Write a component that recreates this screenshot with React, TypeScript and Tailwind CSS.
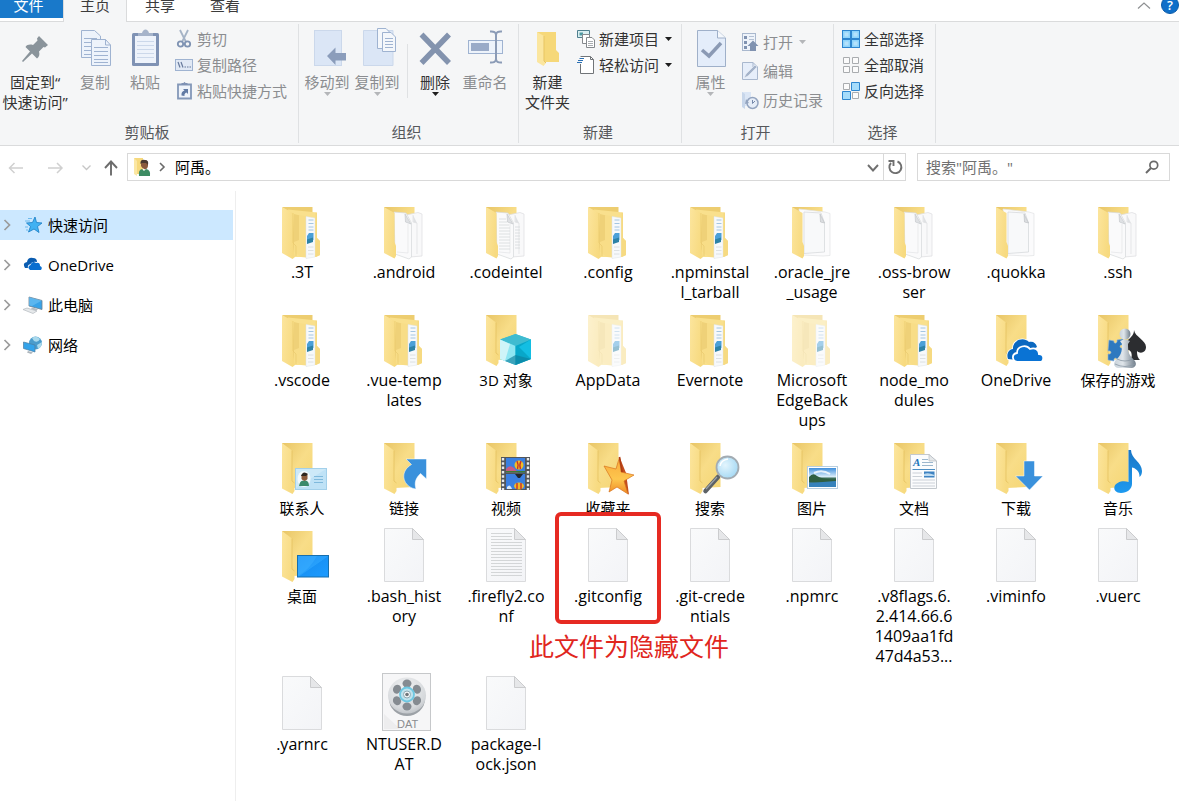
import React from "react";

/* ---------- Explorer item icons (64 x 60 canvas) ---------- */

function Defs() {
  return (
    <svg width="0" height="0" className="absolute" aria-hidden="true">
      <defs>
        <linearGradient id="back" x1="0" y1="0" x2="1" y2="1">
          <stop offset="0" stopColor="#e8c566" />
          <stop offset="0.5" stopColor="#f8dd88" />
          <stop offset="1" stopColor="#f5d675" />
        </linearGradient>
        <linearGradient id="flap" x1="0" y1="0" x2="1" y2="0.4">
          <stop offset="0" stopColor="#fce59d" />
          <stop offset="1" stopColor="#f7da80" />
        </linearGradient>
        <linearGradient id="sheet" x1="0" y1="0" x2="1" y2="1">
          <stop offset="0" stopColor="#f9fafb" />
          <stop offset="1" stopColor="#f3f4f7" />
        </linearGradient>
        <linearGradient id="sky" x1="0" y1="0" x2="1" y2="1">
          <stop offset="0" stopColor="#1e90f5" />
          <stop offset="0.5" stopColor="#27a0fb" />
          <stop offset="0.52" stopColor="#1993f6" />
          <stop offset="1" stopColor="#1c9bff" />
        </linearGradient>
        <linearGradient id="photo" x1="0" y1="0" x2="0" y2="1">
          <stop offset="0" stopColor="#3f8fdc" />
          <stop offset="0.45" stopColor="#d8ecfa" />
          <stop offset="0.55" stopColor="#3e6f58" />
          <stop offset="1" stopColor="#3f86b8" />
        </linearGradient>
        <linearGradient id="star" x1="0" y1="0" x2="0" y2="1">
          <stop offset="0" stopColor="#f9a93a" />
          <stop offset="0.6" stopColor="#fdc64e" />
          <stop offset="1" stopColor="#ef8a25" />
        </linearGradient>
        <linearGradient id="note" x1="0" y1="0" x2="0" y2="1">
          <stop offset="0" stopColor="#1a76c6" />
          <stop offset="1" stopColor="#1d9af0" />
        </linearGradient>
        <linearGradient id="pawn" x1="0" y1="0" x2="1" y2="0">
          <stop offset="0" stopColor="#c9d2da" />
          <stop offset="0.4" stopColor="#dfe5ea" />
          <stop offset="1" stopColor="#6f7d8a" />
        </linearGradient>
        <radialGradient id="lens" cx="0.4" cy="0.4" r="0.7">
          <stop offset="0" stopColor="#e3f5fd" />
          <stop offset="1" stopColor="#9fd6f3" />
        </radialGradient>
        <radialGradient id="reel" cx="0.45" cy="0.3" r="0.8">
          <stop offset="0" stopColor="#f1f2f3" />
          <stop offset="0.7" stopColor="#d6d9dc" />
          <stop offset="1" stopColor="#b4b8bd" />
        </radialGradient>
      </defs>
    </svg>
  );
}

function Canvas({ children, faded }: { children: React.ReactNode; faded?: boolean }) {
  return (
    <svg
      width="64"
      height="60"
      viewBox="0 0 64 60"
      className={faded ? "overflow-visible opacity-50" : "overflow-visible"}
      aria-hidden="true"
    >
      {children}
    </svg>
  );
}

function FolderBase() {
  return (
    <>
      <path d="M12 5H42.500V49L23 50L14 40Z" fill="url(#back)" />
      <path d="M12 5L22 12.500V43L24.500 45V53L22.500 56L12 50.500Z" fill="url(#flap)" />
      <path d="M22 12.500V43L24.500 45" stroke="#e2be5c" strokeWidth="0.7" fill="none" />
    </>
  );
}

function FullFolder({ faded }: { faded?: boolean }) {
  return (
    <Canvas faded={faded}>
      <path d="M12 5H42.500V11L30 20Z" fill="#edcd70" />
      <path d="M18 7.500L47 10.500V36L50 39V53L46 55H22Z" fill="#f9e08d" />
      <path d="M24 12L30 13.500V50L22 50Z" fill="#efd178" />
      <path d="M29 13L36 14V54L41 56L31 55L24 50V40L29 38Z" fill="#f8dd87" />
      <path d="M36 14.500L45 16V55L36 56.500Z" fill="#f7f9fb" stroke="#dde2e6" strokeWidth="0.5" />
      <path d="M38.500 18H43.500M38.500 21.500H43.500M38.500 25H43.500M38.500 28H43.500" stroke="#a4c6e2" strokeWidth="1" />
      <path d="M39 31H43.500V38L37 40.500V34Z" fill="#4ba0d8" />
      <path d="M37 37.500L43 35.500V40L37 42Z" fill="#2d82a6" />
      <path d="M38 45H43.500M38 48.500H43.500M38 52H43.500" stroke="#d5dadd" strokeWidth="0.8" />
      <path d="M45.500 10.500L47 11V36L50 39V53L45.500 55Z" fill="#f6da82" />
      <path d="M12 5L23 11V45L25 55L22.500 57L12 51Z" fill="url(#flap)" />
      <path d="M23 11V41L26 44V54" stroke="#e9c96c" strokeWidth="0.7" fill="none" />
    </Canvas>
  );
}

function PaperFolder({ kind }: { kind: "two" | "lined" | "one" }) {
  return (
    <Canvas>
      <path d="M12 5H42.500V14L24 48Z" fill="url(#back)" />
      {kind === "one" ? (
        <>
          <path d="M19 7L45 10L50 11.500V53.500L43 54L22 53Z" fill="#fbfbfc" stroke="#e1e2e4" strokeWidth="0.7" />
          <path d="M24 10L41 11L44.500 21V50L24 51.500Z" fill="#f8f9fa" stroke="#d3d5d8" strokeWidth="0.7" />
          <path d="M40 12L40.500 20L44.500 21Z" fill="#dcdee1" stroke="#b9bcc0" strokeWidth="0.6" />
        </>
      ) : (
        <>
          <path d="M34 13L46 10.500L50 12V54L38 55Z" fill="#f9f9fa" stroke="#dcdddf" strokeWidth="0.7" />
          <path d="M41 13L41.500 20L45 21Z" fill="#dfe1e4" />
          <path d="M41 13V20L45 21V52" fill="none" stroke="#dcdee0" strokeWidth="0.7" />
          <path d="M22 10L34 11L39.500 21V55L37 57L23 52Z" fill="#fafafb" stroke="#d6d8da" strokeWidth="0.7" />
          <path d="M33 12L33.500 20L39 22Z" fill="#dfe1e4" stroke="#c1c4c8" strokeWidth="0.6" />
          <path d="M25 50L36 51V22" fill="none" stroke="#e3e4e6" strokeWidth="0.7" />
          {kind === "lined" && (
            <path
              d="M25 17H32M25 20H33M25 23H35M25 26H36M25 29H36M25 32H36M25 35H36M25 38H36M25 41H36M25 44H36M25 47H36M41 25H46M41 28H46M41 31H46M41 34H46M41 37H46M41 40H46M41 43H46M41 46H46"
              stroke="#d6d9dc"
              strokeWidth="0.8"
            />
          )}
        </>
      )}
      <path d="M12 5L22.500 11V40L24 44V54L22.500 56.500L12 51Z" fill="url(#flap)" />
    </Canvas>
  );
}

function Sheet({ lined }: { lined?: boolean }) {
  return (
    <Canvas>
      <path d="M12.500 2.500H40.500L51.500 13.500V55.500H12.500Z" fill="url(#sheet)" stroke="#dadbdd" />
      <path d="M40.500 2.500V13.500H51.500Z" fill="#e6e7e9" stroke="#cbccce" strokeLinejoin="round" />
      {lined && (
        <path
          d="M17 7.500H38M17 10.500H38M17 13.500H38M17 16.500H48M17 19.500H48M17 22.500H48M17 25.500H48M17 28.500H48M17 31.500H48M17 34.500H48M17 37.500H48M17 40.500H48M17 43.500H48M17 46.500H48M17 49.500H48"
          stroke="#cfd1d3"
          strokeWidth="0.9"
        />
      )}
    </Canvas>
  );
}

const onedriveBack =
  "M24 49C22 44 25 39 29 39C28 31 39 26 45 32C49 31 52 33 53 37L44 36C39 35 35 38 34 41C30 42 29 46 30 50Z";
const onedriveFront =
  "M34 52C28 52 27 44 33 43C33 36 42 34 46 39C51 37 55 40 55 44C61 44 60 52 56 52Z";

const overlays: Record<string, React.ReactNode> = {
  cube: (
    <>
      <path d="M26 29.500L41.500 24L57 29.500V49L41.500 55L26 49Z" fill="#32c5dc" />
      <path d="M26 29.500L41.500 24L57 29.500L41.500 36Z" fill="#3fbbd0" />
      <path d="M26 29.500L41.500 36V55L26 49Z" fill="#8fe6f2" />
      <path d="M26 29.500L36 34L31 51L26 49Z" fill="#cff4f8" />
      <path d="M41.500 36L57 29.500V49L41.500 55Z" fill="#08a7c9" />
      <path d="M31 51L41.500 45L57 49L41.500 55Z" fill="#0e7f9c" opacity="0.65" />
      <path d="M57 29.500V49L45 37Z" fill="#17c4ea" opacity="0.8" />
    </>
  ),
  onedrive: (
    <>
      <path d={onedriveBack} fill="#0a68c0" stroke="#fff" strokeWidth="1.500" />
      <path d="M24 49C22 44 25 39 29 39C28 31 39 26 45 32C49 31 52 33 53 37L40 44L32 50Z" fill="#0a68c0" />
      <path d={onedriveFront} fill="#0a73d4" stroke="#fff" strokeWidth="1.800" />
    </>
  ),
  games: (
    <>
      <path d="M23 30L28 31C27 34 32 34 31 30L37 29V35C33 34 33 39 37 38V50L31 51C32 47 27 47 28 51L22 50V44C26 45 26 40 22 41Z" fill="#2e79bf" stroke="#8bb4dd" strokeWidth="0.6" />
      <path d="M48 20C49 27 60 30 60 37C60 43 54 44 51 41C51 46 52 48 54 50H44C47 47 46 40 42 40L42 30C45 27 48 25 48 20Z" fill="#2c2d30" />
      <circle cx="39" cy="24" r="5.500" fill="url(#pawn)" />
      <path d="M34 31Q39 28 44 31L42 34C42 42 43 45 47 49C51 52 51 57 46 58H32C27 57 27 52 31 49C35 45 36 42 36 34Z" fill="url(#pawn)" />
      <path d="M31 49Q39 53 47 49M29 54Q39 59 49 54" fill="none" stroke="#8a98a4" strokeWidth="0.8" />
    </>
  ),
  contact: (
    <>
      <rect x="25.500" y="30.500" width="31" height="21" fill="#bfe2f6" stroke="#a3d0ea" />
      <path d="M26 31H56L26 50Z" fill="#d7eefa" opacity="0.6" />
      <ellipse cx="34" cy="41" rx="6.500" ry="8" fill="#f2f9fd" />
      <path d="M31.500 37Q34.500 33 37.500 37V41Q34.500 45 31.500 41Z" fill="#8a5a3b" />
      <path d="M31 38Q33 32 38 36L36 38Z" fill="#2e2620" />
      <path d="M29 48Q30 42 34 43Q39 42 39 48Z" fill="#3b8a6c" />
      <path d="M44 38.500H53M44 41.500H53M44 44.500H53" stroke="#7fb9dc" strokeWidth="1.200" />
    </>
  ),
  link: (
    <path d="M34 21H54.500V41L48.500 35.500C44 40 42 44 44 51C35 50 29 41 33 33C34.500 30 37 28 39.500 26.500Z" fill="#3a91dc" stroke="#fff" strokeWidth="0.500" />
  ),
  video: (
    <>
      <rect x="27" y="19" width="29" height="33" fill="#53565b" />
      <path d="M29 20V52M54 20V52" stroke="#e8eaec" strokeWidth="2.400" strokeDasharray="2.500 1.800" />
      <rect x="32" y="20" width="19" height="14.500" fill="#3b7fe0" />
      <rect x="32" y="36" width="19" height="15" fill="#3b7fe0" />
      <path d="M32 31Q36 26 40 30L44 34.500H32Z" fill="#c65b86" />
      <path d="M32 33H51V34.500H32Z" fill="#3d7b33" />
      <ellipse cx="45" cy="27" rx="4.500" ry="4.500" fill="#f0bf27" />
      <path d="M43 23Q45 27 43.500 31M47 23Q45 27 46.500 31" stroke="#c92f2b" strokeWidth="1.400" fill="none" />
      <path d="M41 36H49L46 40H44Z" fill="#23262d" />
      <ellipse cx="45" cy="48" rx="5" ry="3.500" fill="#eeb929" />
      <path d="M43 45V51M47 45V51" stroke="#c92f2b" strokeWidth="1.400" />
      <path d="M33 49Q36 45 38 51H33Z" fill="#d9e8f5" />
    </>
  ),
  favorite: (
    <>
      <path d="M43.500 19L50 35L53 57L48 50Z" fill="#c34d1d" />
      <path d="M43.500 19L45 34L58 37L48 43L52 56L41 49L33 54L36 42L28 28L40 31Z" fill="url(#star)" stroke="#d9731c" strokeWidth="0.700" strokeLinejoin="round" />
      <path d="M43.500 19L46 34" stroke="#b03c12" strokeWidth="1.600" />
    </>
  ),
  search: (
    <>
      <path d="M40 39L27.500 53" stroke="#5d6266" strokeWidth="4.500" strokeLinecap="round" />
      <path d="M39 39L28 51" stroke="#9ba2a8" strokeWidth="1.200" />
      <circle cx="49.500" cy="29.500" r="11" fill="url(#lens)" stroke="#a3acb3" strokeWidth="1.800" />
      <path d="M42 28Q43 22 50 21" stroke="#fff" strokeWidth="1.500" fill="none" />
    </>
  ),
  picture: (
    <>
      <rect x="27.500" y="28.500" width="30" height="22" fill="#fff" stroke="#b9cfdf" />
      <rect x="29" y="30" width="27" height="19" fill="url(#photo)" />
      <path d="M29 39Q33 34 37 38Q44 42 56 41V43Q42 46 29 44Z" fill="#2f5f41" />
      <path d="M34 35Q42 31 50 36" stroke="#fff" strokeWidth="2" fill="none" opacity="0.8" />
      <path d="M29 45L56 43V49H29Z" fill="#3682bb" />
    </>
  ),
  document: (
    <>
      <path d="M28.500 16.500H47L54.500 23V50.500H28.500Z" fill="#fbfcfd" stroke="#c3c8cd" />
      <path d="M47 16.500V23H54.500Z" fill="#e5e8ea" stroke="#b6bcc2" strokeWidth="0.700" />
      <text x="31" y="28" fontSize="11" fontStyle="italic" fontWeight="700" fontFamily="Liberation Serif, serif" fill="#2174b9">A</text>
      <path d="M40 21.500H46M40 24.500H51M40 27.500H51" stroke="#9cb7cd" strokeWidth="1" />
      <path d="M30.500 31.500H53" stroke="#4c8ec4" strokeWidth="1" />
      <path d="M30.500 35H40M30.500 38.500H40M30.500 42H53M30.500 45H53M30.500 48H53" stroke="#c5ccd2" strokeWidth="0.900" />
      <rect x="42" y="33.500" width="10.500" height="6" fill="#3f83c2" />
      <path d="M42 36Q46 34 52.500 37V38H42Z" fill="#bcdaf0" />
    </>
  ),
  download: <path d="M40 23H50.500V38H59L45.500 52L31.500 38H40Z" fill="#3a91dc" stroke="#fff" strokeWidth="0.500" />,
  music: (
    <path d="M42.500 12H45C45 21 56 24 56 33C56 36 55 38 53.500 39C54 33 49 30 46 29.500V46C46 51 41 55 35 55C30 55 27.500 52 28.500 48.500C30 44 37 42 42.500 44Z" fill="url(#note)" />
  ),
  desktop: (
    <>
      <rect x="27.500" y="29.500" width="31" height="21.500" fill="url(#sky)" stroke="#176fae" />
      <path d="M28 50Q40 43 47 30H28Z" fill="#3bb0ff" opacity="0.5" />
    </>
  ),
};

function SpecialFolder({ kind }: { kind: string }) {
  return (
    <Canvas>
      <FolderBase />
      {overlays[kind]}
    </Canvas>
  );
}

function DatFile() {
  const holes = [0, 60, 120, 180, 240, 300];
  return (
    <Canvas>
      <rect x="10.500" y="-0.500" width="48" height="57" fill="#f6f6f7" stroke="#c6c8ca" />
      <path d="M12 40L28 55H12Z" fill="#e4e4e6" opacity="0.5" />
      <ellipse cx="35" cy="25" rx="18" ry="17" fill="#9ca1a6" />
      <ellipse cx="35" cy="21.500" rx="19" ry="18" fill="url(#reel)" />
      {holes.map((angle) => (
        <ellipse key={angle} cx="35" cy="9.500" rx="4.500" ry="4" fill="#858b91" transform={`rotate(${angle} 35 21)`} />
      ))}
      <circle cx="35" cy="20.500" r="7" fill="#bfe3ee" stroke="#6ec8e2" strokeWidth="1.800" />
      <circle cx="35" cy="20.500" r="3.500" fill="#f4f7f8" stroke="#8fa9b3" />
      <circle cx="35" cy="20.500" r="1.800" fill="#6f767b" />
      <text x="25" y="53.500" fontSize="11" fontFamily="Liberation Sans, sans-serif" fill="#8b8d90">DAT</text>
    </Canvas>
  );
}

/* ---------- File data ---------- */

type Item = { lines: string[]; icon: React.ReactNode; marked?: boolean };

const items: Item[] = [
  { lines: [".3T"], icon: <FullFolder /> },
  { lines: [".android"], icon: <PaperFolder kind="two" /> },
  { lines: [".codeintel"], icon: <PaperFolder kind="lined" /> },
  { lines: [".config"], icon: <FullFolder /> },
  { lines: [".npminstal", "l_tarball"], icon: <FullFolder /> },
  { lines: [".oracle_jre", "_usage"], icon: <PaperFolder kind="one" /> },
  { lines: [".oss-brow", "ser"], icon: <PaperFolder kind="two" /> },
  { lines: [".quokka"], icon: <PaperFolder kind="one" /> },
  { lines: [".ssh"], icon: <PaperFolder kind="two" /> },
  { lines: [".vscode"], icon: <FullFolder /> },
  { lines: [".vue-temp", "lates"], icon: <FullFolder /> },
  { lines: ["3D 对象"], icon: <SpecialFolder kind="cube" /> },
  { lines: ["AppData"], icon: <FullFolder faded /> },
  { lines: ["Evernote"], icon: <FullFolder /> },
  { lines: ["Microsoft", "EdgeBack", "ups"], icon: <FullFolder faded /> },
  { lines: ["node_mo", "dules"], icon: <FullFolder /> },
  { lines: ["OneDrive"], icon: <SpecialFolder kind="onedrive" /> },
  { lines: ["保存的游戏"], icon: <SpecialFolder kind="games" /> },
  { lines: ["联系人"], icon: <SpecialFolder kind="contact" /> },
  { lines: ["链接"], icon: <SpecialFolder kind="link" /> },
  { lines: ["视频"], icon: <SpecialFolder kind="video" /> },
  { lines: ["收藏夹"], icon: <SpecialFolder kind="favorite" /> },
  { lines: ["搜索"], icon: <SpecialFolder kind="search" /> },
  { lines: ["图片"], icon: <SpecialFolder kind="picture" /> },
  { lines: ["文档"], icon: <SpecialFolder kind="document" /> },
  { lines: ["下载"], icon: <SpecialFolder kind="download" /> },
  { lines: ["音乐"], icon: <SpecialFolder kind="music" /> },
  { lines: ["桌面"], icon: <SpecialFolder kind="desktop" /> },
  { lines: [".bash_hist", "ory"], icon: <Sheet /> },
  { lines: [".firefly2.co", "nf"], icon: <Sheet lined /> },
  { lines: [".gitconfig"], icon: <Sheet />, marked: true },
  { lines: [".git-crede", "ntials"], icon: <Sheet /> },
  { lines: [".npmrc"], icon: <Sheet /> },
  { lines: [".v8flags.6.", "2.414.66.6", "1409aa1fd", "47d4a53..."], icon: <Sheet /> },
  { lines: [".viminfo"], icon: <Sheet /> },
  { lines: [".vuerc"], icon: <Sheet /> },
  { lines: [".yarnrc"], icon: <Sheet /> },
  { lines: ["NTUSER.D", "AT"], icon: <DatFile /> },
  { lines: ["package-l", "ock.json"], icon: <Sheet /> },
];

const hanText = /[\u4e00-\u9fff]/;

function FileTile({ item }: { item: Item }) {
  const size = hanText.test(item.lines[0]) ? "text-[15px]" : "text-[16px]";
  return (
    <li className="relative">
      <button type="button" className={`flex w-full flex-col items-center whitespace-nowrap leading-5 text-black ${size}`}>
        {item.icon}
        {item.lines.map((line) => (
          <span key={line} className="leading-5">
            {line}
          </span>
        ))}
      </button>
      {item.marked && (
        <>
          <span className="pointer-events-none absolute -inset-x-0.5 -top-3.5 h-28 rounded-md border-4 border-[#e62a22]" />
          <span className="pointer-events-none absolute -left-7 top-[104px] whitespace-nowrap text-[25px] leading-8 text-[#e0261d]">
            此文件为隐藏文件
          </span>
        </>
      )}
    </li>
  );
}

/* ---------- Ribbon ---------- */

function Caret({ dim }: { dim?: boolean }) {
  return (
    <svg width="7" height="4" viewBox="0 0 7 4" aria-hidden="true">
      <path d="M0 0H7L3.500 4Z" fill={dim ? "#b4b6b9" : "#1e1e1e"} />
    </svg>
  );
}

function BigButton({
  icon,
  lines,
  width,
  dim,
  caret,
}: {
  icon: React.ReactNode;
  lines: string[];
  width: string;
  dim?: boolean;
  caret?: boolean;
}) {
  return (
    <button
      type="button"
      disabled={dim}
      className={`flex shrink-0 flex-col items-center whitespace-nowrap text-[15px] leading-5 ${width} ${dim ? "text-[#8b8d90]" : "text-[#333333]"}`}
    >
      <svg width="40" height="44" viewBox="0 0 40 44" className="mb-0.5 mt-0.5" aria-hidden="true">
        {icon}
      </svg>
      {lines.map((line) => (
        <span key={line}>{line}</span>
      ))}
      {caret && <Caret dim={dim} />}
    </button>
  );
}

function SmallButton({ icon, label, dim, caret }: { icon: React.ReactNode; label: string; dim?: boolean; caret?: boolean }) {
  return (
    <button
      type="button"
      disabled={dim}
      className={`flex items-center gap-1 whitespace-nowrap text-[15px] leading-[26px] ${dim ? "text-[#8b8d90]" : "text-[#333333]"}`}
    >
      <svg width="18" height="20" viewBox="0 0 18 20" aria-hidden="true">
        {icon}
      </svg>
      <span>{label}</span>
      {caret && (
        <span className="ml-0.5">
          <Caret dim={dim} />
        </span>
      )}
    </button>
  );
}

function Group({ title, width, children }: { title: string; width: string; children: React.ReactNode }) {
  return (
    <section aria-label={title} className={`my-0.5 flex shrink-0 flex-col border-r border-[#dfe1e3] ${width}`}>
      <div className="flex h-[98px] items-start">{children}</div>
      <h2 className="pb-px pr-1 text-center text-[15px] leading-5 text-[#56585b]">{title}</h2>
    </section>
  );
}

const blue = "#9fb3d1";

const icons = {
  pin: (
    <path d="M24 10L33 19L30 21.500L28.500 21L24 25.500C25 29 24 31 22 32.500L17 27.500L8 36L7 35L15 25.500L10.500 21C12 18.500 15 18 18 19L22.500 14.500L22 12.500Z" fill="#8a949b" />
  ),
  copy: (
    <>
      <path d="M6.500 4.500H19.500L25.500 10V31.500H6.500Z" fill="#edf3fb" stroke={blue} />
      <path d="M9 12.500H22M9 16.500H22M9 20.500H22M9 24.500H22M9 28.500H22" stroke={blue} />
      <path d="M16.500 13.500H30.500L35.500 19V39.500H16.500Z" fill="#edf3fb" stroke={blue} />
      <path d="M30.500 13.500V19H35.500M19 21.500H33M19 25.500H33M19 29.500H33M19 33.500H33M19 36.500H33" fill="none" stroke={blue} />
    </>
  ),
  paste: (
    <>
      <rect x="7" y="7" width="27" height="33" rx="1.500" fill="#7f92b4" />
      <rect x="10" y="10" width="21" height="27" fill="#eef3fb" />
      <path d="M12 15.500H29M12 19.500H29M12 23.500H29M12 27.500H29M12 31.500H29" stroke="#ccd8ea" />
      <path d="M13 10V7H17Q18 3.500 20.500 3.500T24 7H28V10Z" fill="#a5b3ca" />
    </>
  ),
  cut: (
    <>
      <path d="M5 1L11 13M13 1L7 13" stroke="#a5b3c6" strokeWidth="1.800" />
      <circle cx="5.500" cy="15" r="2.700" fill="none" stroke="#7f93b3" strokeWidth="1.800" />
      <circle cx="12.500" cy="15" r="2.700" fill="none" stroke="#7f93b3" strokeWidth="1.800" />
    </>
  ),
  path: (
    <>
      <rect x="0.500" y="4.500" width="17" height="11" fill="#e1e9f5" stroke={blue} />
      <path d="M3 7L5 12.500M6 7L8 12.500M9.500 12H11M12 12H13.500M14.500 12H16" stroke="#677a9c" strokeWidth="1.200" />
    </>
  ),
  shortcut: (
    <>
      <path d="M3 3.500H16V17.500H3Z" fill="#eef3fa" stroke="#8498b8" strokeWidth="1.800" />
      <path d="M6.500 4V2H8.500Q9.500 0 10.500 2H12.500V4Z" fill="#7f92b4" />
      <path d="M6.500 14.500Q6 10.500 9.500 9.500L8 8H13V13L11.500 11.500Q9 12.500 9.500 15Z" fill="#617aa4" />
    </>
  ),
  move: (
    <>
      <rect x="7.500" y="4.500" width="27" height="35" fill="#dbe6f6" stroke="#cbd8eb" />
      <path d="M20 30L28.500 21.500V27H39V34.500H28.500V39Z" fill="#8b9dbb" />
    </>
  ),
  copyTo: (
    <>
      <path d="M6.500 4.500H36V39.500H6.500Z" fill="#dbe6f6" stroke="#cbd8eb" />
      <path d="M20.500 2.500H29L33.500 7V22.500H20.500Z" fill="#f4f7fb" stroke={blue} />
      <path d="M25.500 6.500H34L38.500 11V25.500H25.500Z" fill="#f4f7fb" stroke={blue} />
      <path d="M28 12.500H36M28 15.500H36M28 18.500H36M28 21.500H36" stroke={blue} />
    </>
  ),
  remove: <path d="M6.500 8.500L34 37M34 8.500L6.500 37" stroke="#8393ae" strokeWidth="5.500" />,
  rename: (
    <>
      <rect x="3.500" y="14.500" width="34" height="13" fill="#edf3fb" stroke={blue} />
      <rect x="6" y="17" width="18" height="8" fill="#9aabc8" />
      <path d="M25 5.500Q31 5 31 9V33Q31 37 25 36.500M37 5.500Q31 5 31 9M31 33Q31 37 37 36.500" fill="none" stroke="#8b9bb6" strokeWidth="2" />
    </>
  ),
  newFolder: (
    <>
      <path d="M9 6H28V24L31 27V36H16Z" fill="#f6d879" />
      <path d="M9 6L16 10V35L18 37L15.500 40L9 36Z" fill="#fbe69f" />
      <path d="M16 10V35L18 37" fill="none" stroke="#e7c563" />
    </>
  ),
  newItem: (
    <>
      <path d="M0.500 1.500H12.500V8.500H0.500Z" fill="#d9eef0" stroke="#4e7f8e" />
      <path d="M2.500 3.500H6V6.500H2.500Z" fill="#4e9aa3" />
      <path d="M5.500 5.500H12.500V14.500H5.500Z" fill="#fff" stroke="#85898d" />
      <path d="M9.500 8.500H15L17.500 11V18.500H9.500Z" fill="#fff" stroke="#85898d" />
      <path d="M11 12.500H16M11 14.500H16M11 16.500H16" stroke="#a9adb1" />
    </>
  ),
  easy: (
    <>
      <path d="M3.500 1.500H13.500L16.500 4.500V18.500H3.500V9" fill="#fff" stroke="#707478" />
      <path d="M13.500 1.500V4.500H16.500" fill="none" stroke="#707478" />
      <path d="M2.500 3.500H7M1 5.500H6M0 7.500H5" stroke="#2c70b3" />
    </>
  ),
  properties: (
    <>
      <path d="M6.500 4.500H26.500L34.500 12V40.500H6.500Z" fill="#e4edfa" stroke="#9fb0c9" />
      <path d="M26.500 4.500V12H34.500" fill="#f5f8fc" stroke="#9fb0c9" />
      <path d="M11 24L18 30L30 17" fill="none" stroke="#8b9ab4" strokeWidth="3.500" />
    </>
  ),
  open: (
    <>
      <rect x="1.500" y="1.500" width="13" height="17" fill="#eef3fa" stroke="#a9b8ce" />
      <path d="M3 4H6V7H3ZM3 9H6V12H3ZM3 14H6V17H3Z" fill="#8092b0" />
      <path d="M8 4.500H13M8 7.500H13" stroke="#b4c1d4" />
      <path d="M12 8.500L17.500 14H15V19H9V14H6.500Z" fill="#8092b0" />
    </>
  ),
  edit: (
    <>
      <path d="M1.500 1.500H12L16.500 6V18.500H1.500Z" fill="#e6eefa" stroke="#a9b8ce" />
      <path d="M12 1.500V6H16.500" fill="none" stroke="#a9b8ce" />
      <path d="M3 17L5 13L14 4L16 6L7 15Z" fill="#a4b3ca" stroke="#f4f7fb" strokeWidth="0.500" />
    </>
  ),
  history: (
    <>
      <path d="M1 2H10V16H1Z" fill="#dbe6f5" />
      <path d="M1 2L4 4V19L1 17Z" fill="#c7d6ea" />
      <circle cx="11.500" cy="13" r="5.500" fill="#e6edf7" stroke="#93a4bf" strokeWidth="1.500" />
      <path d="M11.500 10V13.500L14 11" fill="none" stroke="#7689aa" />
      <path d="M5 9L4 14L8 13" fill="#93a4bf" />
    </>
  ),
  selectAll: (
    <>
      <rect x="0.500" y="1.500" width="17" height="17" fill="#8ed4fb" stroke="#2e86cf" />
      <path d="M9 1V19M0 10H18" stroke="#2e86cf" strokeWidth="2" />
      <path d="M2.500 3.500H6.500V7.500H2.500ZM11.500 3.500H15.500V7.500H11.500ZM2.500 12.500H6.500V16.500H2.500ZM11.500 12.500H15.500V16.500H11.500Z" fill="#b4e2fc" />
    </>
  ),
  selectNone: (
    <path d="M1.500 2.500H7.500V8.500H1.500ZM10.500 2.500H16.500V8.500H10.500ZM1.500 11.500H7.500V17.500H1.500ZM10.500 11.500H16.500V17.500H10.500Z" fill="#fbfbfb" stroke="#a9acaf" />
  ),
  invert: (
    <>
      <path d="M1.500 2.500H7.500V8.500H1.500ZM10.500 11.500H16.500V17.500H10.500Z" fill="#fbfbfb" stroke="#a9acaf" />
      <path d="M9.500 1.500H17.500V9.500H9.500ZM0.500 10.500H8.500V18.500H0.500Z" fill="#a5dcfb" stroke="#2e86cf" />
    </>
  ),
};

function Ribbon() {
  return (
    <div className="flex overflow-hidden border-y border-[#dadbdc] bg-[#f5f6f7]">
      <Group title="剪贴板" width="w-[299px]">
        <BigButton icon={icons.pin} lines={["固定到“", "快速访问”"]} width="w-[70px]" />
        <BigButton icon={icons.copy} lines={["复制"]} width="w-[50px]" dim />
        <BigButton icon={icons.paste} lines={["粘贴"]} width="w-[50px]" dim />
        <div className="flex flex-col pl-[5px] pt-0.5">
          <SmallButton icon={icons.cut} label="剪切" dim />
          <SmallButton icon={icons.path} label="复制路径" dim />
          <SmallButton icon={icons.shortcut} label="粘贴快捷方式" dim />
        </div>
      </Group>
      <Group title="组织" width="w-[220px]">
        <div className="flex pl-[3px]">
          <BigButton icon={icons.move} lines={["移动到"]} width="w-[50px]" dim caret />
          <BigButton icon={icons.copyTo} lines={["复制到"]} width="w-[50px]" dim caret />
        </div>
        <div className="ml-[5px] mt-5 h-[54px] w-px bg-[#dfe1e3]" />
        <div className="flex pl-0.5">
          <BigButton icon={icons.remove} lines={["删除"]} width="w-[50px]" caret />
          <BigButton icon={icons.rename} lines={["重命名"]} width="w-[50px]" dim />
        </div>
      </Group>
      <Group title="新建" width="w-[163px]">
        <BigButton icon={icons.newFolder} lines={["新建", "文件夹"]} width="w-[57px]" />
        <div className="flex flex-col pl-px pt-0.5">
          <SmallButton icon={icons.newItem} label="新建项目" caret />
          <SmallButton icon={icons.easy} label="轻松访问" caret />
        </div>
      </Group>
      <Group title="打开" width="w-[152px]">
        <BigButton icon={icons.properties} lines={["属性"]} width="w-[57px]" dim caret />
        <div className="flex flex-col gap-[3px] pl-0.5 pt-[5px]">
          <SmallButton icon={icons.open} label="打开" dim caret />
          <SmallButton icon={icons.edit} label="编辑" dim />
          <SmallButton icon={icons.history} label="历史记录" dim />
        </div>
      </Group>
      <Group title="选择" width="w-[102px]">
        <div className="flex flex-col pl-2 pt-0.5">
          <SmallButton icon={icons.selectAll} label="全部选择" />
          <SmallButton icon={icons.selectNone} label="全部取消" />
          <SmallButton icon={icons.invert} label="反向选择" />
        </div>
      </Group>
    </div>
  );
}

/* ---------- Tabs, address bar, navigation ---------- */

function TabBar() {
  return (
    <header className="flex h-[21px] items-start text-[15px] leading-[11px] text-[#3c3c3c]">
      <button type="button" className="h-[18px] w-[63px] bg-[#1979ca] pb-[7px] pr-1.5 text-white">
        文件
      </button>
      <button type="button" className="relative z-10 h-[22px] w-16 border-x border-[#dadbdc] bg-[#f5f6f7] pb-[11px]">
        主页
      </button>
      <button type="button" className="h-[22px] w-[66px] pb-[11px]">
        共享
      </button>
      <button type="button" className="h-[22px] w-16 pb-[11px]">
        查看
      </button>
      <div className="ml-auto flex items-start gap-2">
        <button type="button" aria-label="折叠功能区" className="pt-0.5">
          <svg width="14" height="7" viewBox="0 0 14 7">
            <path d="M1 6.500L7 1L13 6.500" fill="none" stroke="#8e9092" strokeWidth="1.200" />
          </svg>
        </button>
        <button type="button" aria-label="帮助">
          <svg width="20" height="14" viewBox="0 0 20 14">
            <circle cx="11" cy="5" r="8.500" fill="#0f6fc9" stroke="#0a5aa8" />
            <text x="11" y="10" textAnchor="middle" fontSize="13" fontWeight="600" fontFamily="Open Sans, sans-serif" fill="#fff">?</text>
          </svg>
        </button>
      </div>
    </header>
  );
}

function AddressBar() {
  return (
    <div className="flex items-center pb-2.5 pr-[9px] pt-[7px]">
      <button type="button" aria-label="后退" className="flex w-8 justify-center pt-0.5">
        <svg width="16" height="12" viewBox="0 0 16 12">
          <path d="M15 6H1.500M6.500 1L1.500 6L6.500 11" fill="none" stroke="#d0d0d0" strokeWidth="1.500" />
        </svg>
      </button>
      <button type="button" aria-label="前进" className="flex w-12 justify-center pt-0.5">
        <svg width="16" height="12" viewBox="0 0 16 12">
          <path d="M0 6H14M9 1L14 6L9 11" fill="none" stroke="#d0d0d0" strokeWidth="1.500" />
        </svg>
      </button>
      <button type="button" aria-label="最近浏览的位置" className="flex w-3 justify-center pt-0.5">
        <svg width="9" height="6" viewBox="0 0 9 6">
          <path d="M0.500 0.500L4.500 4.500L8.500 0.500" fill="none" stroke="#c6c6c6" strokeWidth="1.300" />
        </svg>
      </button>
      <button type="button" aria-label="上移" className="flex w-[35px] justify-center pt-0.5">
        <svg width="16" height="16" viewBox="0 0 16 16">
          <path d="M9 15.500V2M3 8L9 1.500L15 8" fill="none" stroke="#6c6c6c" strokeWidth="1.900" />
        </svg>
      </button>
      <div className="flex h-7 min-w-0 flex-1 border border-[#d9d9d9]">
        <button type="button" className="flex items-center pl-[5px] text-[15px] leading-5 text-black">
          <svg width="18" height="20" viewBox="0 0 18 20" aria-hidden="true">
            <path d="M1 1H10V17H4Z" fill="#f6d97d" />
            <path d="M1 1L4 4V19L1 17Z" fill="#fbe7a4" />
            <path d="M8 7Q8 3 11 3Q15 3 15 7V9Q14 13 11 12Q9 11 8 9Z" fill="#8a5a3d" />
            <path d="M7.500 7Q7 2 12 3Q16 3 15 8L13 6H9Z" fill="#4a3a30" />
            <path d="M6 19Q5 13 9 12L11 14L13 12Q18 13 17 19Z" fill="#3d8c63" />
          </svg>
          <svg width="24" height="10" viewBox="0 0 24 10" aria-hidden="true">
            <path d="M9 1L13 5L9 9" fill="none" stroke="#6a6a6a" strokeWidth="1.600" />
          </svg>
          阿禹。
        </button>
        <button type="button" aria-label="以前的位置" className="ml-auto flex w-5 items-center justify-center pt-0.5">
          <svg width="12" height="8" viewBox="0 0 12 8">
            <path d="M1 1L6 6.500L11 1" fill="none" stroke="#6f6f6f" strokeWidth="1.900" />
          </svg>
        </button>
        <button type="button" aria-label="刷新" className="flex w-[22px] items-center justify-center border-l border-[#d9d9d9]">
          <svg width="16" height="16" viewBox="0 0 16 16">
            <path d="M10.500 2.500A6 6 0 1 1 4 4M1.500 2H6.500V7" fill="none" stroke="#6f6f6f" strokeWidth="1.900" />
          </svg>
        </button>
      </div>
      <form role="search" className="ml-[11px] flex h-7 w-[253px] items-center border border-[#d9d9d9] pl-2 pr-2.5" onSubmit={(e) => e.preventDefault()}>
        <input
          type="search"
          aria-label="搜索"
          placeholder={'搜索"阿禹。"'}
          className="min-w-0 flex-1 bg-transparent text-[15px] leading-5 outline-none placeholder:text-[#707070]"
        />
        <button type="submit" aria-label="开始搜索">
          <svg width="14" height="14" viewBox="0 0 14 14">
            <circle cx="8.800" cy="5.200" r="3.900" fill="none" stroke="#6a6a6a" strokeWidth="1.700" />
            <path d="M6 8L1 13" stroke="#6a6a6a" strokeWidth="2" />
          </svg>
        </button>
      </form>
    </div>
  );
}

const places: { label: string; current?: boolean; icon: React.ReactNode }[] = [
  {
    label: "快速访问",
    current: true,
    icon: (
      <>
        <path d="M12 2L13.500 7.500L19 8L14.500 11.500L16 17.500L11 14L5.500 17L7.500 11.500L3.500 8L9.500 7.500Z" fill="#41b1f2" stroke="#2285c9" strokeWidth="0.900" />
        <path d="M5 3.500H9M2 6H7M2 12H5M3 15H5" stroke="#6db9ec" />
      </>
    ),
  },
  {
    label: "OneDrive",
    icon: (
      <>
        <path d="M2 13Q-1 8 4 7Q5 2 10 3Q14 3 14 7Q9 6 7.500 9Q4 10 5 13Z" fill="#0a5cb0" />
        <path d="M7 15Q3.500 12 7.500 10Q9 5.500 13 8Q17 7 17 11Q20 12 18 15Z" fill="#0a6fd0" />
      </>
    ),
  },
  {
    label: "此电脑",
    icon: (
      <>
        <path d="M6 2L19 5.500V14.500L6 11Z" fill="#39a3e8" stroke="#6b7f8f" strokeWidth="0.800" />
        <path d="M6 2L19 5.500L9 11L6 10.500Z" fill="#7dcaf6" opacity="0.5" />
        <path d="M9 12.500L15 14L13 16L8 14Z" fill="#b5bcc2" />
        <path d="M0 14.500L4 13L14 16L10 18.500Z" fill="#e6e9eb" stroke="#b3b9be" strokeWidth="0.700" />
      </>
    ),
  },
  {
    label: "网络",
    icon: (
      <>
        <circle cx="12.500" cy="8" r="6.500" fill="#4a9ccc" />
        <path d="M9 3Q13 0 17 4Q15 8 11 6ZM14 10L19 7Q19 12 15 14Z" fill="#a9d9ec" />
        <path d="M0.500 7L12 10V17L0.500 13.500Z" fill="#33a3ea" stroke="#4d7d9f" strokeWidth="0.700" />
        <path d="M5 16L10 17.500L8 19L4 17.500Z" fill="#aeb6bc" />
      </>
    ),
  },
];

function Sidebar() {
  return (
    <nav aria-label="导航窗格" className="w-[236px] shrink-0 border-r border-[#eeeeee] pr-0.5">
      <ul className="flex flex-col gap-2.5 pt-[19px]">
        {places.map((place) => (
          <li key={place.label}>
            <a href="#" className={`flex h-[30px] items-center pl-[3px] text-[15px] leading-5 text-black ${place.current ? "bg-[#cce8ff]" : ""}`}>
              <svg width="8" height="12" viewBox="0 0 8 12" aria-hidden="true">
                <path d="M1.500 1L6.500 6L1.500 11" fill="none" stroke="#9b9b9b" strokeWidth="1.700" />
              </svg>
              <svg width="20" height="20" viewBox="0 0 20 20" className="ml-3 mr-[5px]" aria-hidden="true">
                {place.icon}
              </svg>
              {place.label}
            </a>
          </li>
        ))}
      </ul>
    </nav>
  );
}

export default function App() {
  return (
    <div className="flex min-h-screen flex-col bg-white font-['Open_Sans','Noto_Sans_CJK_SC',sans-serif]">
      <Defs />
      <TabBar />
      <Ribbon />
      <AddressBar />
      <div className="flex flex-1 pb-1">
        <Sidebar />
        <main className="min-w-0 flex-1 pl-[15px] pr-2.5 pt-[11px]">
          <ul className="grid grid-cols-[repeat(auto-fill,minmax(100px,1fr))] items-start gap-y-2">
            {items.map((item) => (
              <FileTile key={item.lines.join("")} item={item} />
            ))}
          </ul>
        </main>
      </div>
    </div>
  );
}
